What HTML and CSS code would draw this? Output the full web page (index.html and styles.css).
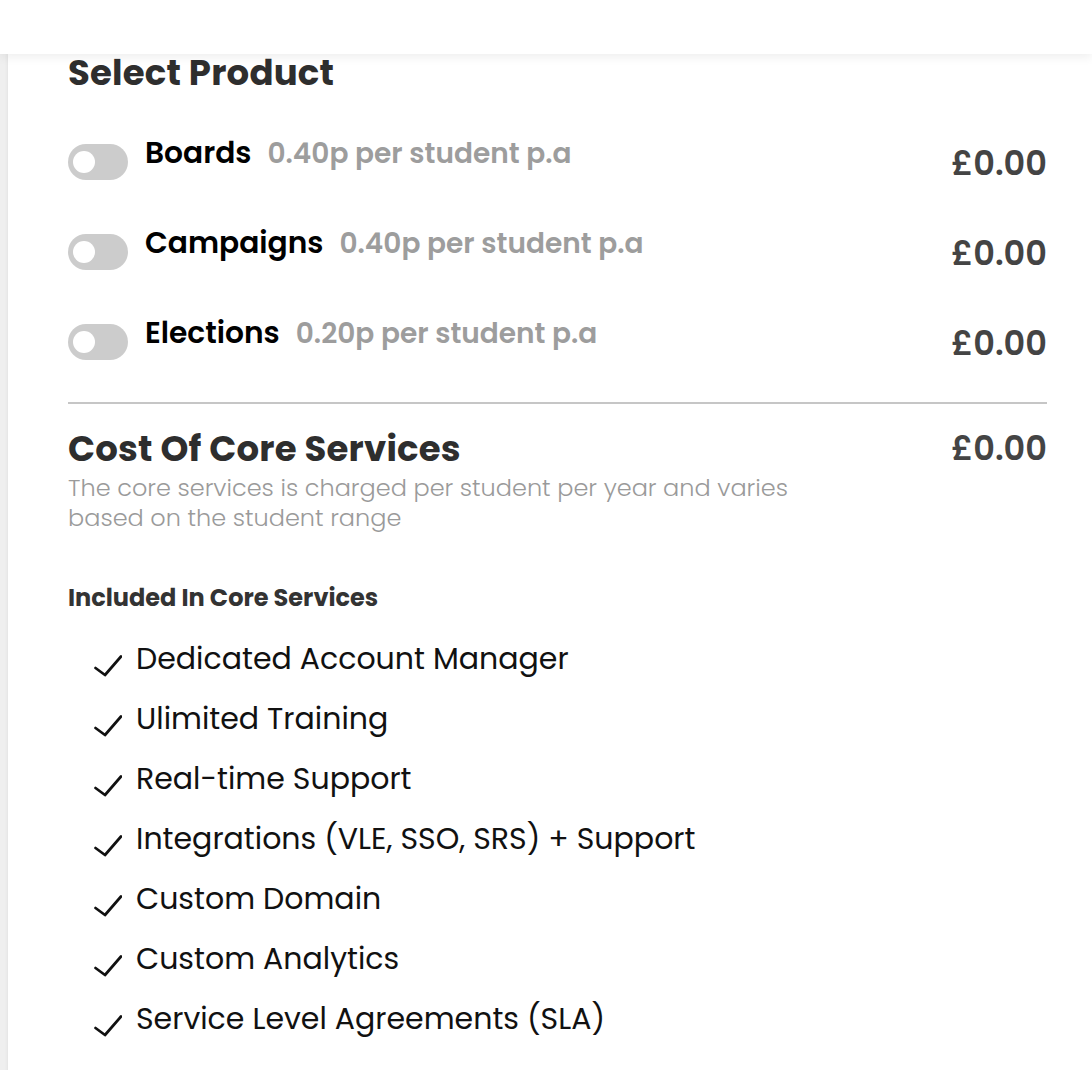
FILE: index.html
```html
<!DOCTYPE html>
<html lang="en">
<head>
<meta charset="utf-8">
<title>Select Product</title>
<link rel="stylesheet" href="styles.css">
</head>
<body>
<header class="topbar"></header>
<main class="panel">
  <h2 class="section-title">Select Product</h2>
  <div class="products">
    <div class="product-row">
      <span class="toggle"><span class="knob"></span></span>
      <div class="product-info"><span class="product-name">Boards</span><span class="product-rate">0.40p per student p.a</span></div>
      <span class="price">£0.00</span>
    </div>
    <div class="product-row">
      <span class="toggle"><span class="knob"></span></span>
      <div class="product-info"><span class="product-name">Campaigns</span><span class="product-rate">0.40p per student p.a</span></div>
      <span class="price">£0.00</span>
    </div>
    <div class="product-row">
      <span class="toggle"><span class="knob"></span></span>
      <div class="product-info"><span class="product-name">Elections</span><span class="product-rate">0.20p per student p.a</span></div>
      <span class="price">£0.00</span>
    </div>
  </div>
  <hr class="divider">
  <div class="core-head">
    <h2 class="section-title">Cost Of Core Services</h2>
    <span class="price">£0.00</span>
  </div>
  <p class="core-desc">The core services is charged per student per year and varies based on the student range</p>
  <h3 class="included-title">Included In Core Services</h3>
  <ul class="features">
    <li><svg class="check" viewBox="0 0 28 22" width="28" height="22"><path d="M1.5 13 L11 20 L27 1.5"/></svg>Dedicated Account Manager</li>
    <li><svg class="check" viewBox="0 0 28 22" width="28" height="22"><path d="M1.5 13 L11 20 L27 1.5"/></svg>Ulimited Training</li>
    <li><svg class="check" viewBox="0 0 28 22" width="28" height="22"><path d="M1.5 13 L11 20 L27 1.5"/></svg>Real-time Support</li>
    <li><svg class="check" viewBox="0 0 28 22" width="28" height="22"><path d="M1.5 13 L11 20 L27 1.5"/></svg>Integrations (VLE, SSO, SRS) + Support</li>
    <li><svg class="check" viewBox="0 0 28 22" width="28" height="22"><path d="M1.5 13 L11 20 L27 1.5"/></svg>Custom Domain</li>
    <li><svg class="check" viewBox="0 0 28 22" width="28" height="22"><path d="M1.5 13 L11 20 L27 1.5"/></svg>Custom Analytics</li>
    <li><svg class="check" viewBox="0 0 28 22" width="28" height="22"><path d="M1.5 13 L11 20 L27 1.5"/></svg>Service Level Agreements (SLA)</li>
  </ul>
</main>
</body>
</html>
```

FILE: styles.css
```css
html, body {
  margin: 0;
  padding: 0;
}

body {
  background: #efefef;
  font-family: "Poppins", "Inter", "Noto Sans", sans-serif;
  overflow: hidden;
}

.topbar {
  position: relative;
  z-index: 2;
  height: 54px;
  background: #ffffff;
  box-shadow: 0 3px 10px rgba(0, 0, 0, 0.07);
}

.panel {
  position: relative;
  z-index: 1;
  display: block;
  margin-left: 8px;
  min-height: 1015px;
  padding: 1px 45px 40px 60px;
  background: #ffffff;
  box-shadow: -1px 0 3px rgba(0, 0, 0, 0.05);
}

.section-title {
  margin: 0;
  font-size: 35.5px;
  line-height: 36px;
  font-weight: 700;
  color: #2e2e2e;
  letter-spacing: 0.2px;
}

.products {
  display: flex;
  flex-direction: column;
  gap: 54px;
  margin-top: 53px;
}

.product-row {
  display: flex;
  align-items: center;
  height: 36px;
}

.toggle {
  flex: none;
  display: flex;
  align-items: center;
  box-sizing: border-box;
  width: 60px;
  height: 36px;
  padding-left: 5px;
  border-radius: 18px;
  background: #cccccc;
}

.knob {
  width: 22px;
  height: 22px;
  border-radius: 50%;
  background: #ffffff;
}

.product-info {
  display: flex;
  align-items: baseline;
  gap: 16px;
  margin-left: 17px;
  padding-bottom: 18px;
}

.product-name {
  font-size: 29.7px;
  font-weight: 600;
  color: #000000;
}

.product-rate {
  font-size: 28px;
  font-weight: 600;
  color: #9d9d9d;
}

.price {
  margin-left: auto;
  font-size: 33.6px;
  font-weight: 600;
  color: #444444;
}

.product-row .price {
  padding-top: 3px;
}

.divider {
  margin: 42px 0 0;
  height: 0;
  border: 0;
  border-top: 2px solid #c6c6c6;
}

.core-head {
  display: flex;
  align-items: center;
  height: 36px;
  margin-top: 27px;
}

.core-desc {
  max-width: 760px;
  margin: 6px 0 0;
  font-size: 24px;
  line-height: 30px;
  font-weight: 300;
  color: #9a9a9a;
}

.included-title {
  margin: 51px 0 0;
  font-size: 24px;
  line-height: 28px;
  font-weight: 700;
  color: #333333;
}

.features {
  list-style: none;
  margin: 17px 0 0;
  padding: 0 0 0 26px;
}

.features li {
  display: flex;
  align-items: center;
  height: 60px;
  font-size: 30px;
  color: #111111;
}

.check {
  flex: none;
  margin: 14px 14px 0 0;
  fill: none;
  stroke: #111111;
  stroke-width: 2.7;
  stroke-linecap: round;
  stroke-linejoin: round;
}
```
